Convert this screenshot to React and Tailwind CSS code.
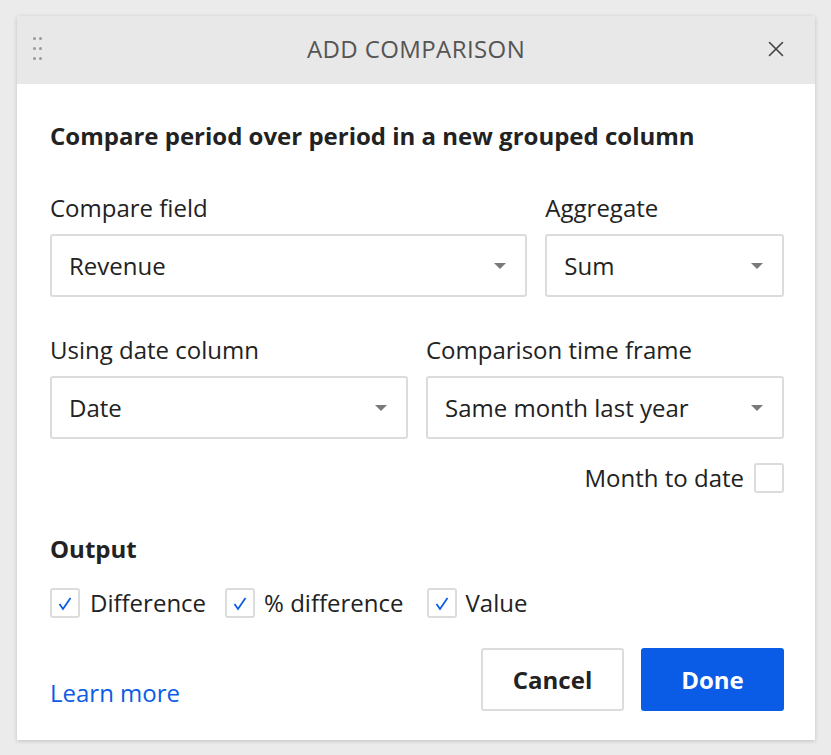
import { X } from 'lucide-react'

function Caret() {
  return (
    <svg width="12" height="6" viewBox="0 0 12 6" className="shrink-0">
      <path d="M0 0 L12 0 L6 6 Z" fill="#7a7a7a" />
    </svg>
  )
}

function Select({ value }) {
  return (
    <div className="h-[63px] flex items-center justify-between pl-[17px] pr-[19px] border-2 border-[#dcdcdc] rounded-[3px] bg-white text-[24px] text-[#222]">
      <span>{value}</span>
      <Caret />
    </div>
  )
}

function Check({ checked }) {
  return (
    <span className="w-[30px] h-[30px] shrink-0 flex items-center justify-center border-2 border-[#dcdcdc] rounded-[3px] bg-white">
      {checked && (
        <svg width="16" height="15" viewBox="0 0 16 15">
          <path d="M2.5 8 L6 13 L13.5 2" fill="none" stroke="#0a5ce6" strokeWidth="1.8" />
        </svg>
      )}
    </span>
  )
}

export default function App() {
  return (
    <div className="min-h-screen bg-[#ebebeb] pt-4 pl-[17px] pr-4" style={{ fontFamily: '"Open Sans", "Noto Sans", sans-serif' }}>
      <div className="w-[798px] bg-white shadow-[0_1px_4px_rgba(0,0,0,0.18)]">
        {/* Header */}
        <div className="h-[68px] bg-[#e8e8e8] relative flex items-center justify-center">
          <div className="absolute left-[16px] top-[21px] grid grid-cols-2 gap-x-[3px] gap-y-[7px]">
            {[0, 1, 2, 3, 4, 5].map((i) => (
              <span key={i} className="w-[3px] h-[3px] rounded-full bg-[#9a9a9a]" />
            ))}
          </div>
          <h1 className="text-[24px] text-[#555] tracking-[0.4px] mb-[3px]">ADD COMPARISON</h1>
          <button className="absolute right-[26px] top-[20px] text-[#444]">
            <X size={26} strokeWidth={1.5} />
          </button>
        </div>

        {/* Body */}
        <div className="pl-[33px] pr-[31px] pt-[35px] pb-[29px] text-[#222]">
          <p className="text-[24px] font-bold leading-[34px]">Compare period over period in a new grouped column</p>

          <div className="grid grid-cols-[2fr_1fr] gap-x-[18px] mt-[40px]">
            <div>
              <div className="text-[24px] leading-[30px] mb-[11px]">Compare field</div>
              <Select value="Revenue" />
            </div>
            <div>
              <div className="text-[24px] leading-[30px] mb-[11px]">Aggregate</div>
              <Select value="Sum" />
            </div>
          </div>

          <div className="grid grid-cols-2 gap-x-[18px] mt-[38px]">
            <div>
              <div className="text-[24px] leading-[30px] mb-[11px]">Using date column</div>
              <Select value="Date" />
            </div>
            <div>
              <div className="text-[24px] leading-[30px] mb-[11px]">Comparison time frame</div>
              <Select value="Same month last year" />
            </div>
          </div>

          <div className="flex justify-end items-center gap-[10px] mt-[21px]">
            <span className="text-[24px]">Month to date</span>
            <Check checked={false} />
          </div>

          <div className="text-[24px] font-bold mt-[38px] leading-[30px]">Output</div>

          <div className="flex items-center mt-[21px] text-[24px]">
            <Check checked />
            <span className="ml-[10px] mr-[19px]">Difference</span>
            <Check checked />
            <span className="ml-[9px] mr-[23px]">% difference</span>
            <Check checked />
            <span className="ml-[9px]">Value</span>
          </div>

          <div className="flex items-end justify-between mt-[27px]">
            <a className="text-[24px] text-[#0a5ce6] leading-[30px] mb-[3px]">Learn more</a>
            <div className="flex gap-[17px]">
              <button className="w-[143px] h-[63px] border-2 border-[#dcdcdc] rounded-[3px] bg-white text-[24px] font-bold text-[#222]">Cancel</button>
              <button className="w-[143px] h-[63px] rounded-[3px] bg-[#0a5ce6] text-[24px] font-bold text-white">Done</button>
            </div>
          </div>
        </div>
      </div>
    </div>
  )
}
